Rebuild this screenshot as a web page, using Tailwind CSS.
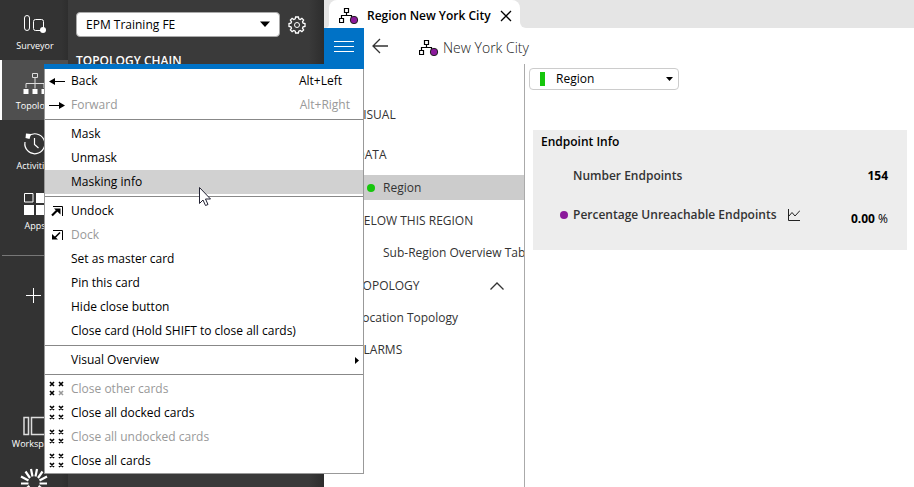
<!DOCTYPE html>
<html lang="en">

<head>
    <meta charset="UTF-8">
    <meta name="viewport" content="width=device-width, initial-scale=1.0">
    <title>Region New York City</title>
    <script src="https://cdn.jsdelivr.net/npm/@tailwindcss/browser@4"></script>
</head>

<body class="relative flex h-screen overflow-hidden bg-white font-['Open_Sans',sans-serif] text-xs text-black">
    <!-- shared icons -->
    <svg class="hidden">
        <symbol id="tree" viewBox="0 0 20 16">
            <path d="M5.5 .5h4v4h-4zM.5 10.500h4v4h-4zM7.500 4.500v3M2.500 10.500v-3h10v3" fill="none" stroke="#000" stroke-width="1.200" />
            <circle cx="15" cy="12" r="3.700" fill="#8b1a9b" stroke="#222" />
        </symbol>
        <symbol id="crosses" viewBox="0 0 16 16">
            <path d="M1 1l4 4M5 1l-4 4M10 1l4 4M14 1l-4 4M1 10l4 4M5 10l-4 4M10 10l4 4M14 10l-4 4" stroke="#000" stroke-width="1.600" />
        </symbol>
    </svg>

    <!-- app bar -->
    <nav class="flex w-17 shrink-0 flex-col bg-linear-to-r from-[#333] from-90% to-[#2e2e2e] text-[9px] text-white">
        <a href="#" class="flex h-15 shrink-0 flex-col items-center pt-[14px] pl-0.5">
            <svg class="h-6 w-6" viewBox="0 0 24 24" fill="none" stroke="#fff">
                <rect x="1.500" y="1.500" width="5" height="15" rx="2.500" />
                <rect x="10.500" y="5.500" width="10" height="11" rx="2" />
                <circle cx="20" cy="16" r="3" fill="#fff" stroke="none" />
            </svg>
            <span class="leading-4">Surveyor</span>
        </a>
        <a href="#" class="flex h-15 shrink-0 flex-col items-center border-l-2 border-white bg-[#4f4f4f] pt-3">
            <svg class="h-6 w-6 shrink-0" viewBox="0 0 24 24" fill="none" stroke="#ddd">
                <path d="M9.500 1.500h5v4h-5zM12 5.500v11M3 16v-4.500h18v4.500" />
                <path d="M.5 17h5v5h-5zM9.500 17h5v5h-5zM18.500 17h5v5h-5z" fill="#fff" stroke="none" />
            </svg>
            <span class="leading-5">Topology</span>
        </a>
        <a href="#" class="flex h-15 shrink-0 flex-col items-center pt-3 pl-0.5">
            <svg class="h-6 w-6 shrink-0" viewBox="0 0 24 24" fill="none" stroke="#fff" stroke-width="1.200">
                <path d="M5 4.500A10 10 0 1 1 2 10M11.500 6v6.500l4 3.500" />
                <path d="M3 1.500l5 .500-1.500 5-4-1z" fill="#fff" stroke="none" />
            </svg>
            <span class="leading-5">Activities</span>
        </a>
        <a href="#" class="flex h-15 shrink-0 flex-col items-center pt-3 pl-0.5">
            <svg class="h-6 w-6 shrink-0" viewBox="0 0 24 24" fill="#fff">
                <path d="M1.500 1.500h8.500v8.500h-8.500z" fill="none" stroke="#fff" />
                <path d="M13 1h10v10h-10zM1 13h10v10h-10zM13 13h10v10h-10z" />
            </svg>
            <span class="leading-5">Apps</span>
        </a>
        <hr class="mx-0.5 mt-[15px] border-[#777]">
        <button class="mx-auto mt-8 shrink-0" aria-label="Add">
            <svg class="h-4 w-4" viewBox="0 0 16 16" stroke="#fff">
                <path d="M7.500 0v15M0 7.500h15" />
            </svg>
        </button>
        <a href="#" class="mt-28 flex shrink-0 flex-col items-center pl-0.5">
            <svg class="h-5 w-6" viewBox="0 0 24 20" fill="none" stroke="#ddd" stroke-width="1.500">
                <path d="M1 1.500h4.500v17H1zM8.500 1.500h14v17h-14z" />
            </svg>
            <span class="leading-4">Workspace</span>
        </a>
        <a href="#" class="mx-auto mt-4 shrink-0" aria-label="Home">
            <svg class="h-7 w-7" viewBox="0 0 28 28" stroke="#fff" stroke-width="2.200">
                <path d="M12.500 8.500L11 1M15.500 8.500L17 1M18 10l4.500-6.500M19.500 12.500L27 8.500M19.500 15.500h7.500M18.500 18l6 4.500M15.500 19.500l2 7.500M12.500 19.500l-2 7.500M9.500 18l-6 4.500M8.500 15.500H1M8.500 12.500L1 8.500M10 10L5.500 3.500" />
            </svg>
        </a>
    </nav>

    <!-- topology chain -->
    <aside class="w-64 shrink-0 bg-linear-to-r from-[#3a3a3a] from-94% to-[#2d2d2d] px-2 pt-3 text-white">
        <div class="flex items-center gap-2">
            <div class="relative w-51">
                <select aria-label="Chain" class="h-[25px] w-full appearance-none rounded border border-[#aaa] bg-white px-[9px] text-xs text-black">
                    <option>EPM Training FE</option>
                </select>
                <svg class="pointer-events-none absolute top-[9px] right-[10px] h-1.5 w-2.5" viewBox="0 0 10 6">
                    <path d="M0 .5h10L5 6z" />
                </svg>
            </div>
            <button aria-label="Settings">
                <svg class="h-[18px] w-[18px]" viewBox="0 0 18 18" fill="none" stroke="#fff">
                    <path d="M7.600 1h2.800l.4 1.900 1.400.6 1.700-1.100 1.700 1.700-1.100 1.700.6 1.400 1.900.4v2.800l-1.900.4-.6 1.400 1.100 1.700-1.700 1.700-1.700-1.100-1.400.6-.4 1.900H7.600l-.4-1.900-1.400-.6-1.700 1.100-1.700-1.700 1.100-1.700-.6-1.400L1 10.400V7.600l1.900-.4.6-1.400-1.100-1.700 1.700-1.700 1.700 1.100 1.400-.6z" stroke-width="1.300" />
                    <circle cx="9" cy="9" r="2.500" />
                </svg>
            </button>
        </div>
        <h2 class="mt-4 text-xs leading-4 font-semibold">TOPOLOGY CHAIN</h2>
    </aside>

    <!-- card -->
    <main class="flex min-w-0 flex-1 flex-col">
        <div class="flex h-7 shrink-0">
            <div class="w-[5px] rounded-br bg-[#e5e5e5]"></div>
            <div class="bg-[#e5e5e5]">
                <div class="flex h-full w-[191px] items-center rounded-t-lg bg-white pt-1 pl-[10px]">
                    <svg class="h-4 w-5">
                        <use href="#tree" />
                    </svg>
                    <span class="ml-2 flex-1 text-xs font-semibold whitespace-nowrap">Region New York City</span>
                    <button class="mr-2" aria-label="Close">
                        <svg class="h-3 w-3" viewBox="0 0 12 12" stroke="#000" stroke-width="1.300">
                            <path d="M1 1l10 10M11 1L1 11" />
                        </svg>
                    </button>
                </div>
            </div>
            <div class="flex-1 rounded-bl-md bg-[#e5e5e5]"></div>
        </div>
        <header class="flex h-9 shrink-0 items-center">
            <button class="flex h-9 w-10 items-center justify-center bg-[#0072c6]" aria-label="Menu">
                <svg class="h-3 w-5" viewBox="0 0 20 12" stroke="#fff">
                    <path d="M0 1.500h20M0 6.500h20M0 11.500h20" />
                </svg>
            </button>
            <button class="ml-2" aria-label="Back">
                <svg class="h-4 w-4" viewBox="0 0 16 16" fill="none" stroke="#333" stroke-width="1.300">
                    <path d="M8 1L1 8l7 7M1 8h15" />
                </svg>
            </button>
            <svg class="mt-1 ml-[31px] h-4 w-5">
                <use href="#tree" />
            </svg>
            <h1 class="mt-1 ml-1 text-sm font-light text-[#222]">New York City</h1>
        </header>
        <div class="flex min-h-0 flex-1">
            <nav class="w-[201px] shrink-0 overflow-hidden border-r border-[#aaa] pt-[38px] leading-[25px] whitespace-nowrap text-[#333]">
                <a href="#" class="block pl-8">VISUAL</a>
                <a href="#" class="mt-[15px] block pl-8">DATA</a>
                <a href="#" class="mt-2 flex items-center bg-[#ccc] pl-[43px]"><span class="mr-2 h-2 w-2 rounded-full bg-[#16c60c]"></span>Region</a>
                <a href="#" class="mt-2 block pl-8">BELOW THIS REGION</a>
                <a href="#" class="mt-[7px] block pl-[59px]">Sub-Region Overview Table</a>
                <a href="#" class="mt-2 flex items-center justify-between pr-5 pl-8">TOPOLOGY
                    <svg class="h-2 w-[14px]" viewBox="0 0 14 8" fill="none" stroke="#333" stroke-width="1.300">
                        <path d="M.5 7.500L7 1l6.500 6.500" />
                    </svg>
                </a>
                <a href="#" class="mt-[7px] block pl-8">Location Topology</a>
                <a href="#" class="mt-[7px] block pl-8">ALARMS</a>
            </nav>
            <section class="min-w-0 flex-1 pt-1 pr-[7px] pl-1">
                <div class="relative w-[150px]">
                    <span class="absolute top-1 left-[11px] h-[14px] w-[5px] bg-[#16c60c]"></span>
                    <select aria-label="Level" class="h-[22px] w-full appearance-none rounded border border-[#ccc] pl-[26px] text-xs">
                        <option>Region</option>
                    </select>
                    <svg class="pointer-events-none absolute top-[9px] right-[6px] h-1 w-[7px]" viewBox="0 0 7 4">
                        <path d="M0 0h7L3.500 4z" />
                    </svg>
                </div>
                <div class="mt-10 ml-1 bg-[#ededed] pr-[19px] pb-[23px] pl-2 font-semibold">
                    <h2 class="pt-1 text-xs leading-4">Endpoint Info</h2>
                    <dl class="pt-[18px] pl-[19px] leading-4">
                        <div class="flex justify-between pl-[13px]">
                            <dt class="text-[#333]">Number Endpoints</dt>
                            <dd class="font-bold">154</dd>
                        </div>
                        <div class="flex items-start justify-between pt-[23px]">
                            <dt class="flex items-center text-[#333]">
                                <span class="mr-[5px] h-2 w-2 rounded-full bg-[#8b1a9b]"></span>Percentage Unreachable Endpoints
                                <svg class="ml-3 h-3 w-3" viewBox="0 0 12 12" fill="none" stroke="#222">
                                    <path d="M.5 0v11.500H12M1 7l3-3.500L7 7l5-5.500" />
                                </svg>
                            </dt>
                            <dd class="pt-1 font-bold">0.00 <span class="font-normal">%</span></dd>
                        </div>
                    </dl>
                </div>
            </section>
        </div>
    </main>

    <!-- card menu -->
    <div role="menu" class="absolute top-16 left-11 w-80 border-r border-b border-l border-[#999] bg-white">
        <div class="-mx-px h-[5px] bg-[#0072c6]"></div>
        <button role="menuitem" class="flex h-6 w-full items-center pr-[21px] pl-1">
            <svg class="mr-[6px] h-4 w-4" viewBox="0 0 16 16">
                <path d="M16 8.500H4" stroke="#000" />
                <path d="M0 8.500l6-3.500v7z" />
            </svg>
            Back<span class="ml-auto">Alt+Left</span>
        </button>
        <button role="menuitem" class="flex h-6 w-full items-center pr-[13px] pl-1 text-[#999]">
            <svg class="mr-[6px] h-4 w-4" viewBox="0 0 16 16">
                <path d="M0 8.500h12" stroke="#000" />
                <path d="M16 8.500l-6-3.500v7z" />
            </svg>
            Forward<span class="ml-auto">Alt+Right</span>
        </button>
        <hr class="my-0.5 border-[#888]">
        <button role="menuitem" class="flex h-6 w-full items-center pl-[26px]">Mask</button>
        <button role="menuitem" class="flex h-6 w-full items-center pl-[26px]">Unmask</button>
        <button role="menuitem" class="flex h-6 w-full items-center bg-[#d1d1d1] pl-[26px]">Masking info</button>
        <hr class="my-0.5 border-[#888]">
        <button role="menuitem" class="flex h-6 w-full items-center pl-[6px]">
            <svg class="mr-2 h-3 w-3" viewBox="0 0 12 12">
                <path d="M2 1.500h9.500V11" fill="none" stroke="#000" />
                <path d="M1 10.500l5-5" stroke="#000" stroke-width="2.200" />
                <path d="M3 3.500h6.500v6z" />
            </svg>
            Undock
        </button>
        <button role="menuitem" class="flex h-6 w-full items-center pl-[6px] text-[#999]">
            <svg class="mr-2 h-3 w-3" viewBox="0 0 12 12">
                <path d="M2 1.500h9.500V11" fill="none" stroke="#000" />
                <path d="M9 3.500l-5 5" stroke="#000" stroke-width="1.600" />
                <path d="M1 5v5.500h6z" />
            </svg>
            Dock
        </button>
        <button role="menuitem" class="flex h-6 w-full items-center pl-[26px]">Set as master card</button>
        <button role="menuitem" class="flex h-6 w-full items-center pl-[26px]">Pin this card</button>
        <button role="menuitem" class="flex h-6 w-full items-center pl-[26px]">Hide close button</button>
        <button role="menuitem" class="flex h-6 w-full items-center pl-[26px]">Close card (Hold SHIFT to close all cards)</button>
        <hr class="my-0.5 border-[#888]">
        <button role="menuitem" class="flex h-6 w-full items-center justify-between pr-1 pl-[26px]">
            Visual Overview
            <svg class="h-[7px] w-1" viewBox="0 0 4 7">
                <path d="M0 0l4 3.500L0 7z" />
            </svg>
        </button>
        <hr class="my-0.5 border-[#888]">
        <button role="menuitem" class="flex h-6 w-full items-center pl-1 text-[#999]">
            <svg class="mr-[6px] h-4 w-4" viewBox="0 0 16 16" stroke-width="1.600">
                <path d="M1 1l4 4M5 1l-4 4M10 1l4 4M14 1l-4 4M1 10l4 4M5 10l-4 4" stroke="#000" />
                <path d="M10 10l4 4M14 10l-4 4" stroke="#999" />
            </svg>
            Close other cards
        </button>
        <button role="menuitem" class="flex h-6 w-full items-center pl-1">
            <svg class="mr-[6px] h-4 w-4">
                <use href="#crosses" />
            </svg>
            Close all docked cards
        </button>
        <button role="menuitem" class="flex h-6 w-full items-center pl-1 text-[#999]">
            <svg class="mr-[6px] h-4 w-4">
                <use href="#crosses" />
            </svg>
            Close all undocked cards
        </button>
        <button role="menuitem" class="flex h-6 w-full items-center pl-1">
            <svg class="mr-[6px] h-4 w-4">
                <use href="#crosses" />
            </svg>
            Close all cards
        </button>
    </div>

    <!-- mouse pointer -->
    <svg class="pointer-events-none absolute top-[187px] left-[199px] h-5 w-3" viewBox="0 0 12 20" fill="#fff" stroke="#223">
        <path d="M.5 .5v16l3.500-3.500 2.500 5.500 2.500-1-2.500-5.500h5z" />
    </svg>
</body>

</html>
